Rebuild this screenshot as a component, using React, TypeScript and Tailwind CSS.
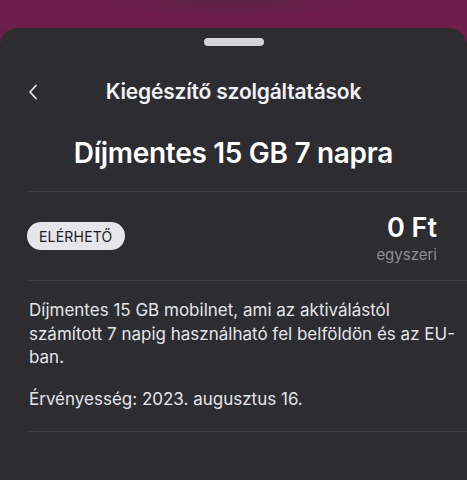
import React from 'react';

const font = { fontFamily: 'Inter, "Noto Sans", sans-serif' };

export default function App() {
  return (
    <div className="w-[467px] h-[480px] overflow-hidden bg-[#6c1d49] relative" style={font}>
      <div className="h-[28px] bg-[radial-gradient(ellipse_at_50%_0%,#5a2346_0%,#6f1d4b_45%,#6f1d4b_100%)]" />
      <div className="bg-[#2c2c31] rounded-t-[18px] h-[452px] flex flex-col">
        <div className="mt-[10px] mx-auto w-[60px] h-[8px] rounded-full bg-[#d4d4d8]" />

        <div className="mt-[24px] h-[44px] relative flex items-center justify-center">
          <svg className="absolute left-[28px] top-[14px]" width="10" height="16" viewBox="0 0 10 16" fill="none">
            <path d="M8 1.5L2 8l6 6.5" stroke="#e5e5ea" strokeWidth="1.8" strokeLinecap="round" strokeLinejoin="round" />
          </svg>
          <h1 className="text-[21px] font-semibold text-[#f2f2f7] tracking-[-0.2px]">Kiegészítő szolgáltatások</h1>
        </div>

        <h2 className="mt-[22px] text-center text-[28px] leading-[34px] font-semibold text-white tracking-[-0.3px]">
          Díjmentes 15 GB 7 napra
        </h2>

        <div className="ml-[29px] mt-[21px] border-t border-[#3f3f45]">
          <div className="h-[88px] flex items-center justify-between pr-[30px]">
            <span className="-ml-[2px] h-[28px] px-[12px] rounded-full bg-[#e5e5ea] text-[#1c1c1e] text-[14px] flex items-center tracking-[0.2px]">
              ELÉRHETŐ
            </span>
            <div className="flex flex-col items-end mt-[5px]">
              <span className="text-[27px] leading-[30px] font-semibold text-white">0 Ft</span>
              <span className="text-[15px] leading-[20px] text-[#8e8e93] mt-[2px]">egyszeri</span>
            </div>
          </div>
        </div>

        <div className="ml-[29px] border-t border-[#3f3f45] pt-[18px] pb-[20px] border-b">
          <p className="text-[17px] leading-[23.5px] text-[#e5e5ea] whitespace-nowrap">
            Díjmentes 15 GB mobilnet, ami az aktiválástól
            <br />
            számított 7 napig használható fel belföldön és az EU-
            <br />
            ban.
          </p>
          <p className="mt-[18px] text-[17px] leading-[23.5px] text-[#e5e5ea]">Érvényesség: 2023. augusztus 16.</p>
        </div>
      </div>
    </div>
  );
}
